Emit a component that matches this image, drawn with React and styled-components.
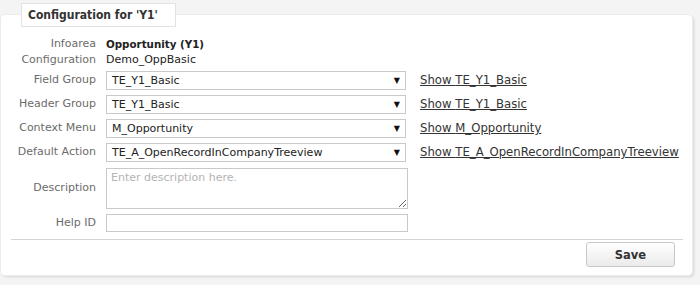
import React from 'react';
import styled, { createGlobalStyle } from 'styled-components';

const GlobalStyle = createGlobalStyle`
  html, body {
    margin: 0;
    padding: 0;
    background: #f4f4f4;
    font-family: "DejaVu Sans", Verdana, sans-serif;
    font-size: 11px;
    color: #222;
  }
`;

const Page = styled.div`
  width: 700px;
  height: 285px;
  padding: 15px 0 0 1px;
  box-sizing: border-box;
`;

const Panel = styled.div`
  width: 691px;
  height: 260px;
  box-sizing: border-box;
  background: #fff;
  border-radius: 4px;
  box-shadow: 0 0 0 1px #ececec, 2px 2px 3px rgba(0, 0, 0, 0.12);
  padding: 0 9px 8px 10px;
  display: flex;
  flex-direction: column;
`;

const Legend = styled.div`
  align-self: flex-start;
  margin: -12px 0 0 10px;
  height: 24px;
  width: 155px;
  box-sizing: border-box;
  border: 1px solid #e2e2e2;
  background: #fff;
  padding: 0 0 0 6px;
  display: flex;
  align-items: center;
  font-family: "DejaVu Sans Condensed", "DejaVu Sans", sans-serif;
  font-stretch: condensed;
  font-weight: bold;
  font-size: 12px;
  color: #333;
`;

const Form = styled.div`
  display: grid;
  grid-template-columns: 85px 302px auto;
  column-gap: 10px;
  align-items: center;
  margin-top: 9px;
`;

const Label = styled.div`
  text-align: right;
  color: #6b6b6b;
  height: ${p => p.$h || 24}px;
  line-height: ${p => p.$h || 24}px;
  white-space: nowrap;
`;

const Value = styled.div`
  grid-column: 2 / 4;
  height: 16px;
  line-height: 16px;
  color: #222;
  font-weight: ${p => (p.$bold ? 'bold' : 'normal')};
  font-size: ${p => (p.$bold ? '10.3px' : '11px')};
`;

const SelectBox = styled.div`
  width: 300px;
  height: 19px;
  box-sizing: border-box;
  border: 1px solid #c9c9c9;
  background: #fff;
  display: flex;
  align-items: center;
  padding: 0 5px 0 5px;
  color: #222;
`;

const SelectText = styled.span`
  flex: 1;
`;

const Arrow = styled.span`
  font-size: 8px;
  color: #111;
`;

const Link = styled.a`
  margin-left: 2px;
  color: #333;
  font-size: 11.7px;
  text-decoration: underline;
  white-space: nowrap;
`;

const TextArea = styled.textarea`
  grid-column: 2 / 4;
  width: 302px;
  height: 41px;
  box-sizing: border-box;
  border: 1px solid #c9c9c9;
  margin: 2px 0 0;
  padding: 2px 4px;
  font-family: "DejaVu Sans", Verdana, sans-serif;
  font-size: 11px;
  color: #222;
  &::placeholder {
    color: #b4b4b4;
  }
`;

const Input = styled.input`
  grid-column: 2 / 4;
  width: 302px;
  height: 18px;
  box-sizing: border-box;
  border: 1px solid #c9c9c9;
  margin: 1px 0 0;
  padding: 0 4px;
  font-family: "DejaVu Sans", Verdana, sans-serif;
  font-size: 11px;
`;

const Divider = styled.div`
  border-top: 1px solid #d4d4d4;
  margin-top: 5px;
`;

const Footer = styled.div`
  display: flex;
  justify-content: flex-end;
  padding: 2px 8px 0 0;
`;

const Button = styled.button`
  width: 89px;
  height: 25px;
  border: 1px solid #c8c8c8;
  border-radius: 3px;
  background: linear-gradient(#ffffff, #ebebeb);
  font-family: "DejaVu Sans", Verdana, sans-serif;
  font-weight: bold;
  font-size: 11.5px;
  color: #333;
  padding: 0;
`;

const selects = [
  { label: 'Field Group', value: 'TE_Y1_Basic' },
  { label: 'Header Group', value: 'TE_Y1_Basic' },
  { label: 'Context Menu', value: 'M_Opportunity' },
  { label: 'Default Action', value: 'TE_A_OpenRecordInCompanyTreeview' },
];

export default function App() {
  return (
    <>
      <GlobalStyle />
      <Page>
        <Panel>
          <Legend>Configuration for 'Y1'</Legend>
          <Form>
            <Label $h={16}>Infoarea</Label>
            <Value $bold>Opportunity (Y1)</Value>
            <Label $h={16}>Configuration</Label>
            <Value>Demo_OppBasic</Value>
            {selects.map((s, i) => (
              <React.Fragment key={i}>
                <Label>{s.label}</Label>
                <SelectBox>
                  <SelectText>{s.value}</SelectText>
                  <Arrow>▼</Arrow>
                </SelectBox>
                <Link href="#">Show {s.value}</Link>
              </React.Fragment>
            ))}
            <Label $h={47}>Description</Label>
            <TextArea placeholder="Enter description here." />
            <Label $h={23}>Help ID</Label>
            <Input />
          </Form>
          <Divider />
          <Footer>
            <Button>Save</Button>
          </Footer>
        </Panel>
      </Page>
    </>
  );
}
